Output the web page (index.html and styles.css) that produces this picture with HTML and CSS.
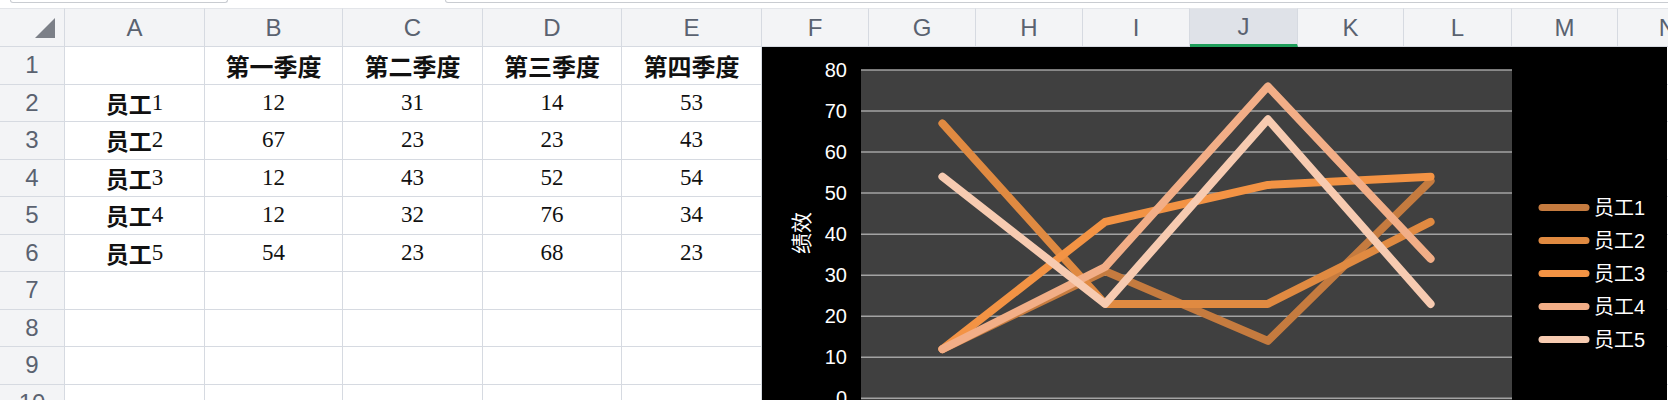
FILE: index.html
```html
<!DOCTYPE html>
<html>
<head>
  <title>员工绩效</title>
  <link rel="stylesheet" href="styles.css">
</head>
<body>
  <div class="page">
    <div class="topbar">
      <div class="box name-box"></div>
      <div class="box fx-box"></div>
    </div>

    <div class="sheet" id="sheet"></div>

    <svg class="chart" width="905" height="353" viewBox="0 0 905 353">
      <rect x="0" y="0" width="905" height="353" fill="#000"/>
      <rect x="99" y="23" width="651" height="330" fill="#404040"/>
      <g stroke="#a3a3a3" stroke-width="1.5">
        <line x1="99" y1="23" x2="750" y2="23"/>
        <line x1="99" y1="64" x2="750" y2="64"/>
        <line x1="99" y1="105.1" x2="750" y2="105.1"/>
        <line x1="99" y1="146.1" x2="750" y2="146.1"/>
        <line x1="99" y1="187.2" x2="750" y2="187.2"/>
        <line x1="99" y1="228.2" x2="750" y2="228.2"/>
        <line x1="99" y1="269.2" x2="750" y2="269.2"/>
        <line x1="99" y1="310.3" x2="750" y2="310.3"/>
        <line x1="99" y1="351.3" x2="750" y2="351.3"/>
      </g>
      <g class="axis-label" text-anchor="end">
        <text x="85" y="23">80</text>
        <text x="85" y="64">70</text>
        <text x="85" y="105.1">60</text>
        <text x="85" y="146.1">50</text>
        <text x="85" y="187.2">40</text>
        <text x="85" y="228.2">30</text>
        <text x="85" y="269.2">20</text>
        <text x="85" y="310.3">10</text>
        <text x="85" y="351.3">0</text>
      </g>
      <text class="axis-title" transform="translate(38 186) rotate(-90)" text-anchor="middle">绩效</text>

      <!-- series -->
      <g fill="none" stroke-width="8" stroke-linecap="round" stroke-linejoin="round">
        <polyline stroke="#c57b3f" points="180.4,302.1 343.1,224.1 505.9,293.9 668.6,133.8"/>
        <polyline stroke="#e08a41" points="180.4,76.4 343.1,256.9 505.9,256.9 668.6,174.9"/>
        <polyline stroke="#f39344" points="180.4,302.1 343.1,174.9 505.9,137.9 668.6,129.7"/>
        <polyline stroke="#f2ae87" points="180.4,302.1 343.1,220 505.9,39.4 668.6,211.8"/>
        <polyline stroke="#f7cbb1" points="180.4,129.7 343.1,256.9 505.9,72.3 668.6,256.9"/>
      </g>

      <!-- legend -->
      <g stroke-width="7" stroke-linecap="round">
        <line x1="780" y1="160.5" x2="824" y2="160.5" stroke="#c57b3f"/>
        <line x1="780" y1="193.5" x2="824" y2="193.5" stroke="#e08a41"/>
        <line x1="780" y1="226.5" x2="824" y2="226.5" stroke="#f39344"/>
        <line x1="780" y1="259.5" x2="824" y2="259.5" stroke="#f2ae87"/>
        <line x1="780" y1="292.5" x2="824" y2="292.5" stroke="#f7cbb1"/>
      </g>
      <g class="legend-label">
        <text x="832" y="160.5">员工1</text>
        <text x="832" y="193.5">员工2</text>
        <text x="832" y="226.5">员工3</text>
        <text x="832" y="259.5">员工4</text>
        <text x="832" y="292.5">员工5</text>
      </g>
    </svg>
  </div>

  <script>
    const columns = ["A", "B", "C", "D", "E", "F", "G", "H", "I", "J", "K", "L", "M", "N"];
    const data = [
      ["", "第一季度", "第二季度", "第三季度", "第四季度"],
      ["员工1", 12, 31, 14, 53],
      ["员工2", 67, 23, 23, 43],
      ["员工3", 12, 43, 52, 54],
      ["员工4", 12, 32, 76, 34],
      ["员工5", 54, 23, 68, 23]
    ];

    const sheet = document.getElementById("sheet");

    function addCell(className, html) {
      const cell = document.createElement("div");
      cell.className = "cell " + className;
      cell.innerHTML = html;
      sheet.appendChild(cell);
    }

    // header row
    addCell("corner", '<span class="triangle"></span>');
    columns.forEach(function (col) {
      addCell(col === "J" ? "col-head active" : "col-head", col);
    });

    // rows 1 - 10
    for (let r = 0; r < 10; r++) {
      addCell("row-head", r + 1);
      const row = data[r] || [];
      columns.forEach(function (col, c) {
        let value = row[c] === undefined ? "" : row[c];
        let cls = "";
        if (r === 0 && value) cls = "title";
        if (c === 0 && value) {
          value = "<b>" + value.slice(0, 2) + "</b>" + value.slice(2);
        }
        addCell(cls, value);
      });
    }
  </script>
</body>
</html>
```

FILE: styles.css
```css
body {
  margin: 0;
  background-color: #fff;
  font-family: "Liberation Sans", "Noto Sans CJK SC", sans-serif;
}

.page {
  position: relative;
  width: 1668px;
  height: 400px;
  overflow: hidden;
}

.topbar {
  display: flex;
  height: 8px;
}

.box {
  height: 2px;
  border: 1px solid #c9ccd1;
  border-top: none;
  border-radius: 0 0 8px 8px;
}

.name-box {
  margin-left: 10px;
  width: 216px;
}

.fx-box {
  margin-left: 217px;
  flex: 1;
  margin-right: -20px;
}

.sheet {
  display: grid;
  grid-template-columns: 65px 140px 138px 140px 139px 140px 107px 107px 107px 107px 108px 106px 108px 106px 100px;
  grid-template-rows: 39px repeat(10, 37.5px);
}

.cell {
  box-sizing: border-box;
  display: flex;
  align-items: center;
  justify-content: center;
  border-right: 1px solid #d6dae1;
  border-bottom: 1px solid #d6dae1;
  font-family: "Liberation Serif", "Noto Sans CJK SC", serif;
  font-size: 23px;
  color: #111;
  white-space: nowrap;
}

.cell b {
  font-family: "Noto Sans CJK SC", sans-serif;
  font-size: 23px;
  font-weight: 700;
}

.title {
  font-family: "Noto Sans CJK SC", sans-serif;
  font-size: 24px;
  font-weight: 700;
}

.corner,
.col-head,
.row-head {
  background-color: #f3f4f6;
  font-family: "Liberation Sans", sans-serif;
  font-size: 24px;
  color: #5a6270;
}

.corner,
.col-head {
  border-top: 1px solid #e3e5e9;
}

.corner {
  justify-content: flex-end;
  align-items: flex-end;
  padding: 0 9px 8px 0;
}

.triangle {
  width: 0;
  height: 0;
  border-left: 20px solid transparent;
  border-bottom: 20px solid #7c8088;
}

.col-head.active {
  background-color: #dfe2e8;
  border-bottom: 3px solid #1f9e5b;
}

.chart {
  position: absolute;
  left: 762px;
  top: 47px;
}

.axis-label text {
  font-family: "Liberation Sans", sans-serif;
  font-size: 20px;
  fill: #fff;
  dominant-baseline: central;
}

.axis-title {
  font-family: "Noto Sans CJK SC", sans-serif;
  font-size: 21px;
  fill: #fff;
  dominant-baseline: central;
}

.legend-label text {
  font-family: "Liberation Sans", "Noto Sans CJK SC", sans-serif;
  font-size: 20px;
  fill: #fff;
  dominant-baseline: central;
}
```
